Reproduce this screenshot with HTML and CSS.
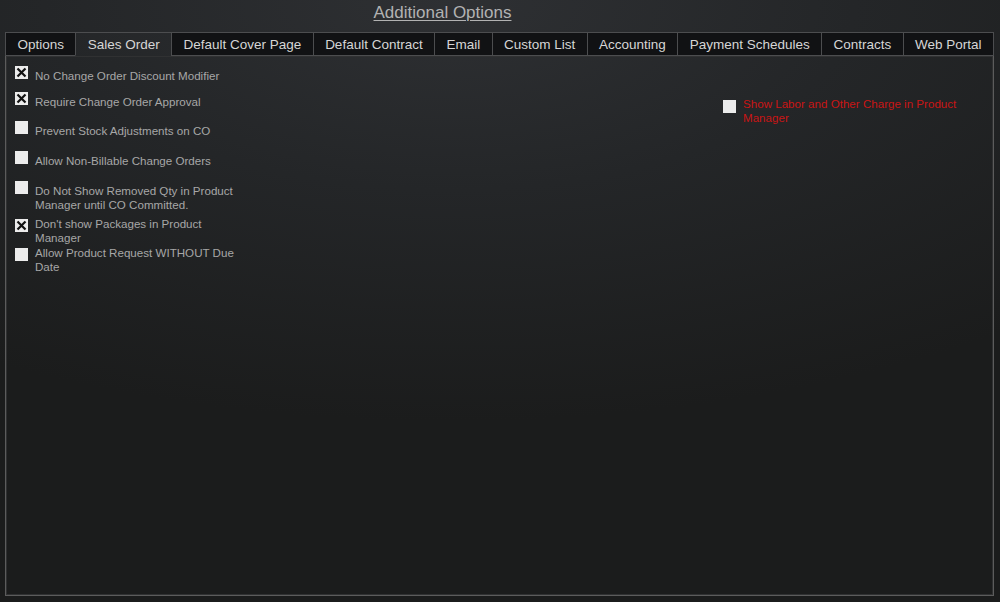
FILE: index.html
```html
<!DOCTYPE html>
<html>
<head>
<meta charset="utf-8">
<title>Additional Options</title>
<link rel="stylesheet" href="styles.css">
</head>
<body>
<div class="page">
  <header class="title-bar"><span class="title">Additional Options</span></header>
  <nav class="tabs">
    <div class="tab">Options</div>
    <div class="tab active">Sales Order</div>
    <div class="tab">Default Cover Page</div>
    <div class="tab">Default Contract</div>
    <div class="tab">Email</div>
    <div class="tab">Custom List</div>
    <div class="tab">Accounting</div>
    <div class="tab">Payment Schedules</div>
    <div class="tab">Contracts</div>
    <div class="tab">Web Portal</div>
  </nav>
  <main class="panel">
    <div class="col left">
      <div class="row r1">
        <span class="box"><svg viewBox="0 0 13 13" width="13" height="13"><rect x="0" y="0" width="13" height="13" fill="#ececec"/><path d="M2.5 2.5 L10.5 10.5 M10.5 2.5 L2.5 10.5" stroke="#111" stroke-width="2.2"/></svg></span>
        <span class="lbl">No Change Order Discount Modifier</span>
      </div>
      <div class="row r2">
        <span class="box"><svg viewBox="0 0 13 13" width="13" height="13"><rect x="0" y="0" width="13" height="13" fill="#ececec"/><path d="M2.5 2.5 L10.5 10.5 M10.5 2.5 L2.5 10.5" stroke="#111" stroke-width="2.2"/></svg></span>
        <span class="lbl">Require Change Order Approval</span>
      </div>
      <div class="row r3">
        <span class="box empty"></span>
        <span class="lbl">Prevent Stock Adjustments on CO</span>
      </div>
      <div class="row r4">
        <span class="box empty"></span>
        <span class="lbl">Allow Non-Billable Change Orders</span>
      </div>
      <div class="row r5">
        <span class="box empty"></span>
        <span class="lbl">Do Not Show Removed Qty in Product Manager until CO Committed.</span>
      </div>
      <div class="row r6 tight">
        <span class="box"><svg viewBox="0 0 13 13" width="13" height="13"><rect x="0" y="0" width="13" height="13" fill="#ececec"/><path d="M2.5 2.5 L10.5 10.5 M10.5 2.5 L2.5 10.5" stroke="#111" stroke-width="2.2"/></svg></span>
        <span class="lbl">Don't show Packages in Product Manager</span>
      </div>
      <div class="row r7 tight">
        <span class="box empty"></span>
        <span class="lbl">Allow Product Request WITHOUT Due Date</span>
      </div>
    </div>
    <div class="col right">
      <div class="row rr tight">
        <span class="box empty"></span>
        <span class="lbl red">Show Labor and Other Charge in Product Manager</span>
      </div>
    </div>
  </main>
</div>
</body>
</html>
```

FILE: styles.css
```css
html, body {
  margin: 0;
  padding: 0;
  height: 100%;
}
body {
  background: radial-gradient(ellipse 90% 70% at 45% 0%, #2e3033 0%, #242628 45%, #1b1c1c 100%);
  background-color: #1b1c1c;
  font-family: "Liberation Sans", Arial, sans-serif;
  overflow: hidden;
}
.page {
  width: 1000px;
  height: 602px;
  display: flex;
  flex-direction: column;
  padding: 0 6px 6px 5px;
  box-sizing: border-box;
}
.title-bar {
  height: 32px;
  text-align: center;
  padding-right: 114px;
  padding-top: 3px;
  box-sizing: border-box;
}
.title {
  color: #b2b2b2;
  font-size: 17px;
  text-decoration: underline;
  text-underline-offset: 2px;
}
.tabs {
  display: flex;
  height: 24px;
}
.tab {
  flex: 1 1 auto;
  background: #111214;
  color: #d6d6d6;
  font-size: 13.5px;
  line-height: 23px;
  text-align: center;
  border-top: 1px solid #4c4d4f;
  border-left: 1px solid #4c4d4f;
  border-bottom: 1px solid #4c4d4f;
}
.tab:last-child {
  border-right: 1px solid #4c4d4f;
}
.tab.active {
  background: transparent;
  border-bottom-color: transparent;
}
.panel {
  flex: 1;
  border: 1px solid #5c5c5c;
  border-top: none;
  box-shadow: inset 0 0 0 1px #303132;
  display: flex;
  padding: 10px 0 0 9px;
  box-sizing: border-box;
}
.col.left {
  width: 250px;
}
.col.right {
  margin-left: 458px;
  padding-top: 31px;
  width: 250px;
}
.row {
  display: flex;
  align-items: flex-start;
}
.box {
  width: 13px;
  height: 13px;
  flex: none;
  display: block;
}
.box svg {
  display: block;
}
.box.empty {
  background: #ececec;
}
.lbl {
  color: #a7a7a7;
  font-size: 11.6px;
  line-height: 14px;
  padding-top: 3px;
  margin-left: 7px;
  width: 200px;
}
.tight .box {
  margin-top: 2px;
}
.tight .lbl {
  padding-top: 0;
}
.rr .box {
  margin-top: 3px;
}
.lbl.red {
  color: #c91515;
  width: 225px;
}
.r2 { margin-top: 9px; }
.r3 { margin-top: 12px; }
.r4 { margin-top: 13px; }
.r5 { margin-top: 13px; }
.r6 { margin-top: 5px; }
.r7 { margin-top: 1px; }
```
